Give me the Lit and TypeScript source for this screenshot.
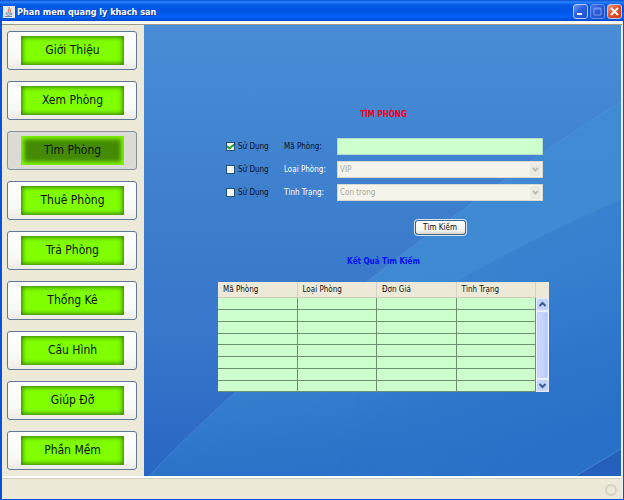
import { LitElement, html, css, svg } from "lit";
import { customElement, state } from "lit/decorators.js";
import { classMap } from "lit/directives/class-map.js";

const NAV = [
  "Giới Thiệu",
  "Xem Phòng",
  "Tìm Phòng",
  "Thuê Phòng",
  "Trả Phòng",
  "Thống Kê",
  "Cấu Hình",
  "Giúp Đỡ",
  "Phần Mềm",
];

const COLUMNS = ["Mã Phòng", "Loại Phòng", "Đơn Giá", "Tình Trạng"];
const ROWS = Array.from({ length: 8 });

const chevron = (d: string) => svg`<path d=${d} fill="none" stroke="currentColor" stroke-width="2"/>`;

@customElement("title-bar")
export class TitleBar extends LitElement {
  static styles = css`
    :host {
      display: flex;
      align-items: center;
      box-sizing: border-box;
      height: 21px;
      padding: 2px 2px 0 3px;
      gap: 2px;
      background: linear-gradient(#0a4fd0 0, #2a83fb 2px, #0358e6 5px, #0055e4 12px, #0262fb 17px, #0246c8 21px);
    }
    .title {
      flex: 1;
      margin: 0;
      font: bold 9px/14px "DejaVu Sans Condensed", "DejaVu Sans", sans-serif;
      color: #fff;
      text-shadow: 1px 1px 0 #0a3a98;
      white-space: nowrap;
    }
    .control {
      width: 15px;
      height: 15px;
      padding: 0;
      border: 1px solid #b4c8f4;
      border-radius: 3px;
      background: linear-gradient(135deg, #6f9cf4, #2a5fe0 45%, #2050d0);
      display: grid;
      place-items: center;
    }
    .dim {
      border-color: #6890ea;
      background: linear-gradient(135deg, #4a78e4, #2a5ad8 45%, #2450cc);
    }
    .close {
      background: linear-gradient(135deg, #f0987c, #e2542c 45%, #cc3c14);
    }
    .controls {
      display: flex;
      gap: 2px;
    }
  `;

  render() {
    return html`
      <svg width="12" height="12" viewBox="0 0 12 12" aria-hidden="true">
        <rect width="12" height="12" fill="#e4e8ee" />
        <path d="M6 1C7 3 4 4 6 6M8 2.500C6 4 8 5 7 6" fill="none" stroke="#e05a30" />
        <path d="M3 7h5c0 3-5 3-5 0zM8 7c2 0 1 2-.5 2M2 10.500h7" fill="none" stroke="#7088a4" />
      </svg>
      <h1 class="title">Phan mem quang ly khach san</h1>
      <div class="controls">
        <button class="control" aria-label="Minimize">
          <svg width="11" height="11" viewBox="0 0 11 11"><path d="M2 8h5" stroke="#fff" stroke-width="2" /></svg>
        </button>
        <button class="control dim" aria-label="Maximize">
          <svg width="11" height="11" viewBox="0 0 11 11">
            <path d="M2 2h7v7H2zM2 3h7" fill="none" stroke="#7c9cec" />
          </svg>
        </button>
        <button class="control close" aria-label="Close">
          <svg width="11" height="11" viewBox="0 0 11 11">
            <path d="M2 2l7 7M9 2l-7 7" stroke="#fff" stroke-width="2" />
          </svg>
        </button>
      </div>
    `;
  }
}

@customElement("side-nav")
export class SideNav extends LitElement {
  @state() private active = 2;

  static styles = css`
    :host {
      display: block;
      background: #ece9d8;
    }
    .list {
      display: flex;
      flex-direction: column;
      gap: 11px;
      padding: 6px 7px 5px 5px;
    }
    .item {
      display: block;
      height: 39px;
      padding: 4px 12px 4px 13px;
      border: 1px solid #5f7896;
      border-radius: 3px;
      background: linear-gradient(#fff, #f8f8f6 70%, #eceae4);
      font: 12px/29px "DejaVu Sans Condensed", "DejaVu Sans", sans-serif;
      color: #081400;
    }
    .face {
      display: block;
      height: 29px;
      background: #80ff00;
      border-radius: 1px;
      box-shadow: inset 0 0 5px 1px #2f6c08;
    }
    .active {
      background: #dcdad4;
      border-color: #8492a0;
    }
    .active .face {
      background: #448a04;
      box-shadow: inset 0 0 4px 3px #80f808;
    }
  `;

  render() {
    return html`
      <nav class="list">
        ${NAV.map(
          (label, i) => html`
            <button class=${classMap({ item: true, active: i === this.active })} @click=${() => (this.active = i)}>
              <span class="face">${label}</span>
            </button>
          `
        )}
      </nav>
    `;
  }
}

@customElement("result-table")
export class ResultTable extends LitElement {
  static styles = css`
    :host {
      display: grid;
      grid-template-columns: 1fr 13px;
      background: #ece9d8;
    }
    .table {
      width: 100%;
      border-collapse: separate;
      border-spacing: 0;
      table-layout: fixed;
      font: 8px/12px "DejaVu Sans Condensed", "DejaVu Sans", sans-serif;
      color: #101010;
    }
    .head {
      box-sizing: border-box;
      height: 16px;
      padding: 0 5px;
      text-align: left;
      font-weight: normal;
      background: #ece9d8;
      border-right: 1px solid #d6d2c2;
      border-bottom: 1px solid #d0ccb8;
    }
    .cell {
      box-sizing: border-box;
      height: 12px;
      padding: 0;
      background: #ccffcc;
      border-right: 1px solid #6f8f72;
      border-bottom: 1px solid #6f8f72;
    }
    .row:nth-child(4n) .cell {
      height: 11px;
    }
    .scroll {
      display: flex;
      flex-direction: column;
      margin-top: 16px;
      background: #eef0fb;
    }
    .arrow {
      height: 13px;
      padding: 0;
      border: 1px solid #e4ebff;
      border-radius: 2px;
      background: #c4d4fc;
      color: #3c5890;
      display: grid;
      place-items: center;
    }
    .thumb {
      flex: 1;
      margin: 1px;
      border: 1px solid #c4d2fa;
      border-radius: 1px;
      background: linear-gradient(90deg, #ccd8ff, #c0d0fc 70%, #b4c6f8);
    }
  `;

  render() {
    return html`
      <table class="table">
        <thead>
          <tr>
            ${COLUMNS.map((c) => html`<th class="head" scope="col">${c}</th>`)}
          </tr>
        </thead>
        <tbody>
          ${ROWS.map(() => html`<tr class="row">${COLUMNS.map(() => html`<td class="cell"></td>`)}</tr>`)}
        </tbody>
      </table>
      <div class="scroll">
        <button class="arrow" aria-label="Scroll up">
          <svg width="9" height="7" viewBox="0 0 9 7">${chevron("M1.500 5L4.500 2L7.500 5")}</svg>
        </button>
        <div class="thumb"></div>
        <button class="arrow" aria-label="Scroll down">
          <svg width="9" height="7" viewBox="0 0 9 7">${chevron("M1.500 2L4.500 5L7.500 2")}</svg>
        </button>
      </div>
    `;
  }
}

@customElement("search-panel")
export class SearchPanel extends LitElement {
  static styles = css`
    :host {
      display: block;
      position: relative;
      background: #3f83cf;
      font: 8px/12px "DejaVu Sans Condensed", "DejaVu Sans", sans-serif;
    }
    .backdrop {
      position: absolute;
      inset: 0;
      width: 100%;
      height: 100%;
    }
    .content {
      position: relative;
      max-width: 331px;
      margin: 0 auto;
      padding: 84px 0 16px 2px;
    }
    .heading {
      margin: 0;
      font-size: 8px;
      line-height: 12px;
      text-align: center;
      color: #f00018;
    }
    .results {
      margin: 20px 0 14px;
      color: #0010f0;
    }
    .form {
      display: grid;
      grid-template-columns: 58px 53px 1fr;
      gap: 6px 0;
      align-items: center;
      padding: 17px 6px 0 8px;
    }
    .use {
      display: flex;
      align-items: center;
      gap: 3px;
      color: #04101f;
    }
    .box {
      appearance: none;
      width: 9px;
      height: 9px;
      margin: 0;
      background: #f6f6f2;
      outline: 1px solid #1c5180;
      outline-offset: -1px;
      display: grid;
      place-items: center;
    }
    .box:checked::before {
      content: "";
      width: 7px;
      height: 6px;
      background: #21a121;
      clip-path: polygon(0 30%, 35% 60%, 100% 0, 100% 40%, 35% 100%, 0 70%);
    }
    .name {
      color: #04101f;
    }
    .off {
      color: #fff;
    }
    .field {
      box-sizing: border-box;
      width: 100%;
      height: 17px;
      margin: 0;
      padding: 0 2px;
      border: 1px solid #b4dccc;
      border-radius: 0;
      background: #ccffcc;
      font: inherit;
      appearance: none;
    }
    .select {
      position: relative;
      display: flex;
    }
    .select .field {
      background: #f5f4ea;
      border-color: #d8d8cc;
      color: #aca899;
      opacity: 1;
    }
    .drop {
      position: absolute;
      top: 2px;
      right: 2px;
      width: 11px;
      height: 13px;
      background: #ebeae0;
      color: #c0bdb0;
    }
    .submit {
      grid-column: 3;
      justify-self: center;
      width: 51px;
      height: 15px;
      margin: 13px 0 1px;
      padding: 0;
      border: 1px solid #3c6890;
      border-radius: 3px;
      box-shadow: 0 0 0 1px #d4e4f4;
      background: linear-gradient(#fff, #f2f1ec 75%, #d8d4c8);
      font: inherit;
      color: #101010;
    }
  `;

  private renderSelect(id: string, label: string, value: string) {
    return html`
      <label class="use"><input class="box" type="checkbox" />Sử Dụng</label>
      <label class="name off" for=${id}>${label}</label>
      <div class="select">
        <select class="field" id=${id} disabled>
          <option>${value}</option>
        </select>
        <svg class="drop" viewBox="0 0 11 13" aria-hidden="true">${chevron("M3 5L5.500 7.500L8 5")}</svg>
      </div>
    `;
  }

  render() {
    return html`
      <svg class="backdrop" viewBox="0 0 477 450" preserveAspectRatio="none" aria-hidden="true">
        <defs>
          <linearGradient id="base" x1="0" y1="0" x2="0" y2="1">
            <stop offset="0" stop-color="#488dd6" />
            <stop offset=".45" stop-color="#3c7dcc" />
            <stop offset=".7" stop-color="#3876ca" />
            <stop offset="1" stop-color="#2766c4" />
          </linearGradient>
          <linearGradient id="sheen" x1="0" y1="0" x2=".15" y2="1">
            <stop offset="0" stop-color="#418ad4" />
            <stop offset=".6" stop-color="#3f88d2" />
            <stop offset="1" stop-color="#2b72c8" />
          </linearGradient>
          <linearGradient id="fold" gradientUnits="userSpaceOnUse" x1="390" y1="200" x2="477" y2="380">
            <stop offset="0" stop-color="#2f78cc" stop-opacity=".35" />
            <stop offset="1" stop-color="#2a70c8" stop-opacity=".85" />
          </linearGradient>
          <linearGradient id="fade" x1="0" y1="0" x2="1" y2="0">
            <stop offset="0" stop-color="#000" />
            <stop offset=".6" stop-color="#fff" />
          </linearGradient>
          <mask id="soft"><rect x="190" y="140" width="287" height="310" fill="url(#fade)" /></mask>
        </defs>
        <rect width="477" height="450" fill="url(#base)" />
        <path d="M5 450C90 360 220 255 311 190S430 105 477 77V450Z" fill="url(#sheen)" />
        <path
          d="M5 450C90 360 220 255 311 190S430 105 477 77"
          fill="none"
          stroke="#62a0e0"
          stroke-opacity=".35"
        />
        <path d="M235 300Q370 220 477 174V450H190Z" fill="url(#fold)" mask="url(#soft)" />
        <path d="M432 450L477 423V450Z" fill="#2460bc" />
        <path d="M432 450L477 423" stroke="#5a98dc" stroke-opacity=".5" />
      </svg>
      <div class="content">
        <h2 class="heading">TÌM PHÒNG</h2>
        <form class="form" @submit=${(e: Event) => e.preventDefault()}>
          <label class="use"><input class="box" type="checkbox" checked />Sử Dụng</label>
          <label class="name" for="room">Mã Phòng:</label>
          <input class="field" id="room" type="text" />
          ${this.renderSelect("kind", "Loại Phòng:", "VIP")}
          ${this.renderSelect("status", "Tình Trạng:", "Con trong")}
          <button class="submit">Tìm Kiếm</button>
        </form>
        <h2 class="heading results">Kết Quả Tìm Kiếm</h2>
        <result-table></result-table>
      </div>
    `;
  }
}

@customElement("app-root")
export class AppRoot extends LitElement {
  static styles = css`
    :host {
      display: flex;
      flex-direction: column;
      box-sizing: border-box;
      min-height: 100vh;
      background: #0a50d8;
    }
    .frame {
      flex: 1;
      display: flex;
      flex-direction: column;
      margin: 0 1px 1px 2px;
      background: #ece9d8;
      border-top: 3px solid #f8f8f4;
      border-right: 1px solid #e8eef4;
    }
    .main {
      flex: 1;
      display: grid;
      grid-template-columns: 142px 1fr;
      border-top: 1px solid #a09888;
    }
    .panel {
      border-right: 1px solid #e8f0f8;
    }
    .status {
      display: flex;
      align-items: center;
      justify-content: flex-end;
      height: 21px;
      padding: 0 4px;
      border-top: 2px solid #fbfbf8;
      box-shadow: inset 0 1px 0 #d4d0c0;
    }
  `;

  render() {
    return html`
      <title-bar></title-bar>
      <div class="frame">
        <div class="main">
          <side-nav></side-nav>
          <search-panel class="panel"></search-panel>
        </div>
        <footer class="status">
          <svg width="14" height="14" viewBox="0 0 14 14" aria-hidden="true">
            <circle cx="7" cy="8" r="5" fill="none" stroke="#d4d0c8" stroke-width="2" />
          </svg>
        </footer>
      </div>
    `;
  }
}
